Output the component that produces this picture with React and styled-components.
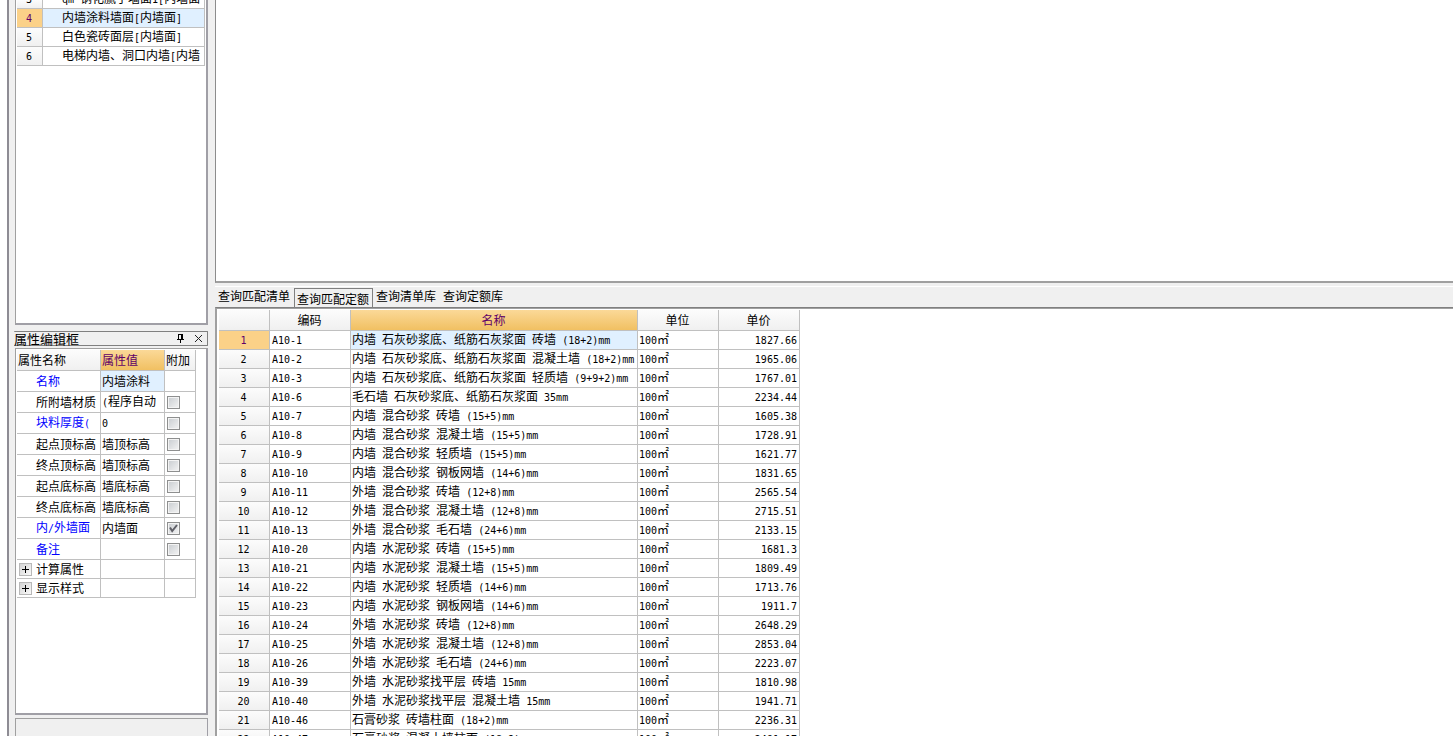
import React, { Fragment } from 'react'
import styled, { createGlobalStyle, css } from 'styled-components'

const GlobalStyle = createGlobalStyle`
  * {
    box-sizing: border-box;
  }
  body {
    margin: 0;
    background: #f0f0f0;
    color: #000;
    font: 12px/16px 'Noto Sans CJK SC', 'Liberation Sans', sans-serif;
  }
  button,
  input {
    margin: 0;
    padding: 0;
    font: inherit;
  }
`

const WindowStyle = styled.div`
  display: flex;
  height: 100vh;
  padding-left: 7px;
  overflow: hidden;
  background: #fff;
`

const SidebarStyle = styled.aside`
  display: flex;
  flex-direction: column;
  flex: none;
  width: 208px;
  padding: 0 7px 0 5px;
  background: #f0f0f0;
  border-left: 2px solid #8e8c94;
`

const PanelStyle = styled.section`
  flex: none;
  margin-left: 1px;
  padding: 1px;
  background: #fff;
  border: 1px solid #a0a0a0;
  border-right: 2px solid #a09fa6;
  border-bottom: 2px solid #a09fa6;
`

const ListPanel = styled(PanelStyle)`
  height: 325px;
  padding-top: 0;
  border-top: none;
`

const PropertyPanel = styled(PanelStyle)`
  height: 367px;
  margin-top: 2px;
`

const EmptyPanel = styled(PanelStyle)`
  flex: 1;
  margin-top: 3px;
  background: #f0f0f0;
  border-right-width: 1px;
  border-bottom: none;
`

const TitleBar = styled.header`
  display: flex;
  align-items: center;
  flex: none;
  height: 15px;
  margin-top: 6px;
  padding-right: 3px;
  border: 1px solid #808080;
  border-left: none;
  border-radius: 1px;
`

const Title = styled.h2`
  flex: 1;
  margin: 0;
  font-size: 13px;
  font-weight: normal;
`

const TitleButton = styled.button`
  display: flex;
  align-items: center;
  justify-content: center;
  width: 11px;
  height: 13px;
  margin-left: 7px;
  background: none;
  border: none;
`

const MainStyle = styled.main`
  display: flex;
  flex-direction: column;
  flex: 1;
  min-width: 0;
  background: #f0f0f0;
`

const Canvas = styled.section`
  flex: none;
  height: 283px;
  background: #fff;
  border-left: 1px solid #8c8c8c;
  border-bottom: 2px solid #a0a0a0;
`

const TabBar = styled.nav`
  display: flex;
  align-items: flex-start;
  flex: none;
  height: 21px;
  margin-top: 3px;
  border-top: 1px solid #fff;
`

const Tab = styled.button`
  height: 18px;
  padding: 0 4px 0 3px;
  background: none;
  border: none;
  white-space: nowrap;
  ${({ $active }) =>
    $active &&
    css`
      height: 19px;
      margin-top: 1px;
      padding: 2px 3px 0 2px;
      line-height: 16px;
      border: 1px solid #808080;
      border-bottom: none;
    `}
`

const ResultPanel = styled.section`
  flex: 1;
  min-height: 0;
  padding: 2px 0 0 3px;
  overflow: hidden;
  background: #fff;
  border-top: 1px solid #808080;
  border-left: 1px solid #a0a0a0;
  box-shadow: inset 1px 1px #a0a0a0;
`

const Grid = styled.table`
  table-layout: fixed;
  width: ${({ $width }) => $width}px;
  border-collapse: separate;
  border-spacing: 0;
`

const Row = styled.tr`
  height: ${({ $height }) => $height || 19}px;
`

const cellStyle = css`
  padding: 0 2px 0 1px;
  overflow: hidden;
  font-weight: normal;
  line-height: 16px;
  white-space: pre;
  border-right: 1px solid #c0c0c0;
  border-bottom: 1px solid #c0c0c0;
`

const Cell = styled.td`
  ${cellStyle}
  padding-left: ${({ $indent }) => $indent || 1}px;
  text-align: ${({ $align }) => $align || 'left'};
  color: ${({ $link }) => ($link ? '#0000ff' : '#000')};
  background: ${({ $current }) => ($current ? '#e0f0ff' : '#fff')};
`

const HeadCell = styled.th`
  ${cellStyle}
  text-align: ${({ $align }) => $align || 'center'};
  color: ${({ $current }) => ($current ? '#600068' : '#000')};
  background: ${({ $current }) =>
    $current ? 'linear-gradient(#fbd998, #f1c062)' : 'linear-gradient(#fcfcfc, #f0f0f0)'};
`

const IndexCell = styled.th`
  ${cellStyle}
  color: ${({ $current }) => ($current ? '#600068' : '#000')};
  background: ${({ $current }) => ($current ? '#fbd188' : 'linear-gradient(#fcfcfc, #f0f0f0)')};
`

// the first visible row is scrolled half out of view
const ClippedLine = styled.div`
  display: flex;
  align-items: flex-end;
  justify-content: ${({ $center }) => ($center ? 'center' : 'flex-start')};
  height: 8px;
  overflow: hidden;
`

const Latin = styled.span`
  font-family: 'DejaVu Sans Mono', 'Liberation Mono', monospace;
  font-size: 10px;
`

const CheckLabel = styled.label`
  position: relative;
  display: flex;
  padding-left: 1px;
`

const CheckBox = styled.input`
  appearance: none;
  width: 13px;
  height: 13px;
  background: linear-gradient(135deg, #c8ccd0, #f4f4f4);
  border: 1px solid #8e8f8f;
  box-shadow: inset 0 0 0 1px #f4f4f4;
`

const CheckMark = styled.svg`
  position: absolute;
  top: 0;
  left: 1px;
  pointer-events: none;
`

const NameLine = styled.div`
  display: flex;
  align-items: center;
  gap: 4px;
  padding-left: 1px;
`

const ExpandButton = styled.button`
  display: flex;
  width: 13px;
  height: 13px;
  background: linear-gradient(135deg, #d4d4d4, #fafafa);
  border: 1px solid #b8b8b8;
`

// half-width runs take the monospace face so that two of them fill one ideograph
const Text = ({ children }) =>
  children
    .split(/([\x20-\x7e]+)/)
    .map((part, i) => (i % 2 ? <Latin key={i}>{part}</Latin> : <Fragment key={i}>{part}</Fragment>))

const components = [
  ['3', 'qm 钢化腻子墙面1[内墙面'],
  ['4', '内墙涂料墙面[内墙面]'],
  ['5', '白色瓷砖面层[内墙面]'],
  ['6', '电梯内墙、洞口内墙[内墙'],
]

const properties = [
  { name: '名称', value: '内墙涂料', link: true },
  { name: '所附墙材质', value: '(程序自动', check: false },
  { name: '块料厚度(', value: '0', link: true, check: false },
  { name: '起点顶标高', value: '墙顶标高', check: false },
  { name: '终点顶标高', value: '墙顶标高', check: false },
  { name: '起点底标高', value: '墙底标高', check: false },
  { name: '终点底标高', value: '墙底标高', check: false },
  { name: '内/外墙面', value: '内墙面', link: true, check: true },
  { name: '备注', value: '', link: true, check: false },
]

const groups = ['计算属性', '显示样式']

const quotas = [
  ['A10-1', '内墙 石灰砂浆底、纸筋石灰浆面 砖墙 (18+2)mm', '1827.66'],
  ['A10-2', '内墙 石灰砂浆底、纸筋石灰浆面 混凝土墙 (18+2)mm', '1965.06'],
  ['A10-3', '内墙 石灰砂浆底、纸筋石灰浆面 轻质墙 (9+9+2)mm', '1767.01'],
  ['A10-6', '毛石墙 石灰砂浆底、纸筋石灰浆面 35mm', '2234.44'],
  ['A10-7', '内墙 混合砂浆 砖墙 (15+5)mm', '1605.38'],
  ['A10-8', '内墙 混合砂浆 混凝土墙 (15+5)mm', '1728.91'],
  ['A10-9', '内墙 混合砂浆 轻质墙 (15+5)mm', '1621.77'],
  ['A10-10', '内墙 混合砂浆 钢板网墙 (14+6)mm', '1831.65'],
  ['A10-11', '外墙 混合砂浆 砖墙 (12+8)mm', '2565.54'],
  ['A10-12', '外墙 混合砂浆 混凝土墙 (12+8)mm', '2715.51'],
  ['A10-13', '外墙 混合砂浆 毛石墙 (24+6)mm', '2133.15'],
  ['A10-20', '内墙 水泥砂浆 砖墙 (15+5)mm', '1681.3'],
  ['A10-21', '内墙 水泥砂浆 混凝土墙 (15+5)mm', '1809.49'],
  ['A10-22', '内墙 水泥砂浆 轻质墙 (14+6)mm', '1713.76'],
  ['A10-23', '内墙 水泥砂浆 钢板网墙 (14+6)mm', '1911.7'],
  ['A10-24', '外墙 水泥砂浆 砖墙 (12+8)mm', '2648.29'],
  ['A10-25', '外墙 水泥砂浆 混凝土墙 (12+8)mm', '2853.04'],
  ['A10-26', '外墙 水泥砂浆 毛石墙 (24+6)mm', '2223.07'],
  ['A10-39', '外墙 水泥砂浆找平层 砖墙 15mm', '1810.98'],
  ['A10-40', '外墙 水泥砂浆找平层 混凝土墙 15mm', '1941.71'],
  ['A10-46', '石膏砂浆 砖墙柱面 (18+2)mm', '2236.31'],
  ['A10-47', '石膏砂浆 混凝土墙柱面 (18+2)mm', '2491.17'],
]

const tabs = ['查询匹配清单', '查询匹配定额', '查询清单库', '查询定额库']

const ComponentList = () => (
  <Grid $width={188}>
    <colgroup>
      <col width="26" />
      <col />
    </colgroup>
    <tbody>
      {components.map(([index, name], i) => (
        <Row key={index} $height={i === 0 ? 9 : 19}>
          <IndexCell scope="row" $current={i === 1}>
            {i === 0 ? (
              <ClippedLine $center>
                <Text>{index}</Text>
              </ClippedLine>
            ) : (
              <Text>{index}</Text>
            )}
          </IndexCell>
          <Cell $indent={19} $current={i === 1}>
            {i === 0 ? (
              <ClippedLine>
                <span>
                  <Text>{name}</Text>
                </span>
              </ClippedLine>
            ) : (
              <Text>{name}</Text>
            )}
          </Cell>
        </Row>
      ))}
    </tbody>
  </Grid>
)

const Check = ({ label, checked }) => (
  <CheckLabel>
    <CheckBox type="checkbox" aria-label={label} defaultChecked={checked} />
    {checked && (
      <CheckMark width="13" height="13" viewBox="0 0 13 13">
        <path d="M3 5.5 5.2 9 10 3" fill="none" stroke="#606068" strokeWidth="2" />
      </CheckMark>
    )}
  </CheckLabel>
)

const PropertyGrid = () => (
  <Grid $width={179}>
    <colgroup>
      <col width="84" />
      <col width="64" />
      <col width="31" />
    </colgroup>
    <thead>
      <Row $height={21}>
        <HeadCell $align="left">属性名称</HeadCell>
        <HeadCell $align="left" $current>
          属性值
        </HeadCell>
        <HeadCell $align="left">附加</HeadCell>
      </Row>
    </thead>
    <tbody>
      {properties.map(({ name, value, link, check }, i) => (
        <Row key={name} $height={21}>
          <Cell $indent={19} $link={link}>
            <Text>{name}</Text>
          </Cell>
          <Cell $current={i === 0}>
            <Text>{value}</Text>
          </Cell>
          <Cell>{check !== undefined && <Check label={name} checked={check} />}</Cell>
        </Row>
      ))}
      {groups.map((name) => (
        <Row key={name}>
          <Cell>
            <NameLine>
              <ExpandButton aria-label={name}>
                <svg width="11" height="11" viewBox="0 0 11 11">
                  <path d="M2 5.5H9M5.5 2V9" stroke="#000" />
                </svg>
              </ExpandButton>
              {name}
            </NameLine>
          </Cell>
          <Cell />
          <Cell />
        </Row>
      ))}
    </tbody>
  </Grid>
)

const QuotaTable = () => (
  <Grid $width={581}>
    <colgroup>
      <col width="51" />
      <col width="81" />
      <col width="287" />
      <col width="81" />
      <col width="81" />
    </colgroup>
    <thead>
      <Row $height={21}>
        <HeadCell />
        <HeadCell>编码</HeadCell>
        <HeadCell $current>名称</HeadCell>
        <HeadCell>单位</HeadCell>
        <HeadCell>单价</HeadCell>
      </Row>
    </thead>
    <tbody>
      {quotas.map(([code, name, price], i) => (
        <Row key={code}>
          <IndexCell scope="row" $current={i === 0}>
            <Text>{String(i + 1)}</Text>
          </IndexCell>
          <Cell $indent={2}>
            <Text>{code}</Text>
          </Cell>
          <Cell $current={i === 0}>
            <Text>{name}</Text>
          </Cell>
          <Cell>
            <Text>100㎡</Text>
          </Cell>
          <Cell $align="right">
            <Text>{price}</Text>
          </Cell>
        </Row>
      ))}
    </tbody>
  </Grid>
)

export default function App() {
  return (
    <>
      <GlobalStyle />
      <WindowStyle>
        <SidebarStyle>
          <ListPanel>
            <ComponentList />
          </ListPanel>
          <TitleBar>
            <Title>属性编辑框</Title>
            <TitleButton aria-label="固定">
              <svg width="9" height="9" viewBox="0 0 9 9" shapeRendering="crispEdges">
                <path d="M2 0h5v1H2zM2 1h1v4H2zM5 1h2v4H5zM1 5h7v1H1zM4 6h1v3H4z" />
              </svg>
            </TitleButton>
            <TitleButton aria-label="关闭">
              <svg width="9" height="9" viewBox="0 0 9 9">
                <path d="M1 1 8 8M8 1 1 8" stroke="#222" />
              </svg>
            </TitleButton>
          </TitleBar>
          <PropertyPanel>
            <PropertyGrid />
          </PropertyPanel>
          <EmptyPanel />
        </SidebarStyle>
        <MainStyle>
          <Canvas />
          <TabBar>
            {tabs.map((tab, i) => (
              <Tab key={tab} $active={i === 1}>
                {tab}
              </Tab>
            ))}
          </TabBar>
          <ResultPanel>
            <QuotaTable />
          </ResultPanel>
        </MainStyle>
      </WindowStyle>
    </>
  )
}
